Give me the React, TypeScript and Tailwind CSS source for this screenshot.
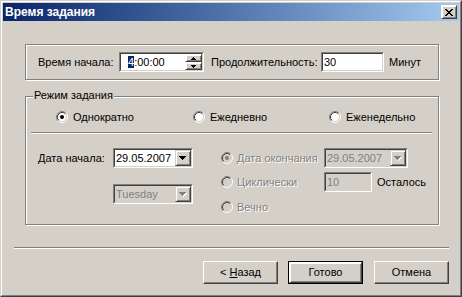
import type { ReactNode } from "react";

const sunkenOuter = "border border-t-[#808080] border-l-[#808080] border-r-white border-b-white";
const sunkenInner = "border border-t-[#404040] border-l-[#404040] border-r-[#d4d0c8] border-b-[#d4d0c8]";
const raised =
  "border border-t-[#d4d0c8] border-l-[#d4d0c8] border-r-[#404040] border-b-[#404040] shadow-[inset_1px_1px_0_#fff,inset_-1px_-1px_0_#808080]";
const etched = "border border-[#808080] shadow-[inset_1px_1px_0_#fff,1px_1px_0_#fff]";
const embossed = "text-[#808080] [text-shadow:1px_1px_0_#fff]";

const ArrowDown = ({ disabled }: { disabled?: boolean }) => (
  <svg width="8" height="5" viewBox="0 0 8 5" shapeRendering="crispEdges">
    {disabled ? (
      <path d="M1 1h7v1H1z M2 2h5v1H2z M3 3h3v1H3z M4 4h1v1H4z" fill="#fff" />
    ) : null}
    <path d="M0 0h7v1H0z M1 1h5v1H1z M2 2h3v1H2z M3 3h1v1H3z" fill={disabled ? "#808080" : "#000"} />
  </svg>
);

const SpinArrow = ({ up }: { up?: boolean }) => (
  <svg width="5" height="3" viewBox="0 0 5 3" shapeRendering="crispEdges">
    <path d={up ? "M2 0h1v1H2z M1 1h3v1H1z M0 2h5v1H0z" : "M0 0h5v1H0z M1 1h3v1H1z M2 2h1v1H2z"} fill="#000" />
  </svg>
);

const Radio = ({ checked, disabled }: { checked?: boolean; disabled?: boolean }) => (
  <svg width="12" height="12" viewBox="0 0 12 12" className="shrink-0">
    <circle cx="6" cy="6" r="4.5" fill={disabled ? "#d4d0c8" : "#fff"} />
    <path d="M2.11 9.89 A5.5 5.5 0 0 1 9.89 2.11" stroke="#808080" fill="none" />
    <path d="M9.89 2.11 A5.5 5.5 0 0 1 2.11 9.89" stroke="#fff" fill="none" />
    <path d="M2.82 9.18 A4.5 4.5 0 0 1 9.18 2.82" stroke="#404040" fill="none" />
    <path d="M9.18 2.82 A4.5 4.5 0 0 1 2.82 9.18" stroke="#d4d0c8" fill="none" />
    {checked ? <circle cx="6" cy="6" r="2" fill={disabled ? "#808080" : "#000"} /> : null}
  </svg>
);

const RadioItem = ({
  label,
  checked,
  disabled,
  className,
}: {
  label: string;
  checked?: boolean;
  disabled?: boolean;
  className?: string;
}) => (
  <div className={`flex items-center ${className ?? ""}`}>
    <Radio checked={checked} disabled={disabled} />
    <span className={disabled ? embossed : ""}>{label}</span>
  </div>
);

const Field = ({
  width,
  disabled,
  children,
  className,
}: {
  width: string;
  disabled?: boolean;
  children: ReactNode;
  className?: string;
}) => (
  <div className={`${sunkenOuter} ${width} h-[20px] ${className ?? ""}`}>
    <div className={`${sunkenInner} h-full flex ${disabled ? "bg-[#d4d0c8]" : "bg-white"}`}>{children}</div>
  </div>
);

const Combo = ({ text, width, disabled }: { text: string; width: string; disabled?: boolean }) => (
  <Field width={width} disabled={disabled}>
    <span className={`flex-1 pl-px leading-[16px] ${disabled ? "text-[#808080]" : ""}`}>{text}</span>
    <div className={`${raised} w-[16px] h-full flex items-center justify-center bg-[#d4d0c8]`}>
      <ArrowDown disabled={disabled} />
    </div>
  </Field>
);

const Button = ({ children, isDefault, className }: { children: ReactNode; isDefault?: boolean; className?: string }) =>
  isDefault ? (
    <div className={`w-[75px] h-[23px] border border-black ${className ?? ""}`}>
      <div className={`${raised} border-t-white border-l-white h-full flex items-center justify-center`}>{children}</div>
    </div>
  ) : (
    <div
      className={`w-[75px] h-[23px] border border-t-white border-l-white border-r-[#404040] border-b-[#404040] shadow-[inset_-1px_-1px_0_#808080] flex items-center justify-center ${className ?? ""}`}
    >
      {children}
    </div>
  );

export default function App() {
  return (
    <div className="w-[462px] h-[297px] border border-t-[#d4d0c8] border-l-[#d4d0c8] border-r-[#404040] border-b-[#404040] bg-[#d4d0c8] font-['Liberation_Sans',Arial,sans-serif] text-[11px] leading-[13px] text-black select-none">
      <div className="h-full border border-t-white border-l-white border-r-[#808080] border-b-[#808080] p-px flex flex-col">
        <div className="h-[18px] shrink-0 flex items-center justify-between bg-gradient-to-r from-[#0a246a] to-[#a6caf0]">
          <span className="pl-[2px] text-white font-bold text-[12px]">Время задания</span>
          <div className={`${raised} border-t-white border-l-white mr-[2px] w-[16px] h-[14px] flex items-center justify-center bg-[#d4d0c8]`}>
            <svg width="8" height="7" viewBox="0 0 8 7" shapeRendering="crispEdges">
              <path
                d="M0 0h2v1H0z M6 0h2v1H6z M1 1h2v1H1z M5 1h2v1H5z M2 2h4v1H2z M3 3h2v1H3z M2 4h4v1H2z M1 5h2v1H1z M5 5h2v1H5z M0 6h2v1H0z M6 6h2v1H6z"
                fill="#000"
              />
            </svg>
          </div>
        </div>

        <div className={`${etched} mt-[23px] ml-[22px] w-[414px] h-[36px] shrink-0 flex items-center pl-[12px]`}>
          <span className="w-[81px]">Время начала:</span>
          <Field width="w-[85px]">
            <span className="flex-1 pl-[7px] flex items-center">
              <span className="bg-[#0a246a] text-white leading-[12px]">4</span>
              <span>:00:00</span>
            </span>
            <div className="w-[17px] h-full flex flex-col">
              <div className={`${raised} border-t-white border-l-white shadow-[inset_-1px_-1px_0_#808080] h-[8px] flex items-center justify-center bg-[#d4d0c8]`}>
                <SpinArrow up />
              </div>
              <div className={`${raised} border-t-white border-l-white shadow-[inset_-1px_-1px_0_#808080] h-[8px] flex items-center justify-center bg-[#d4d0c8]`}>
                <SpinArrow />
              </div>
            </div>
          </Field>
          <span className="ml-[7px] w-[110px]">Продолжительность:</span>
          <Field width="w-[63px]">
            <span className="pl-px leading-[16px]">30</span>
          </Field>
          <span className="ml-[5px]">Минут</span>
        </div>

        <div className={`${etched} relative mt-[16px] ml-[22px] w-[414px] h-[129px] shrink-0 pt-[13px]`}>
          <span className="absolute -top-[8px] left-[7px] px-px bg-[#d4d0c8]">Режим задания</span>
          <div className="h-[14px] flex items-center pl-[30px]">
            <RadioItem label="Однократно" checked className="w-[137px] gap-[5px]" />
            <RadioItem label="Ежедневно" className="w-[136px] gap-[5px]" />
            <RadioItem label="Еженедельно" className="gap-[5px]" />
          </div>
          <div className="mt-[8px] ml-[5px] w-[401px] h-[2px] border-t border-t-[#808080] border-b border-b-white" />
          <div className="mt-[14px] flex">
            <div className="w-[195px] pl-[12px]">
              <div className="h-[20px] flex items-center">
                <span className="w-[75px]">Дата начала:</span>
                <Combo text="29.05.2007" width="w-[80px]" />
              </div>
              <div className="mt-[16px] ml-[75px]">
                <Combo text="Tuesday" width="w-[80px]" disabled />
              </div>
            </div>
            <div className="flex flex-col">
              <div className="h-[20px] flex items-center">
                <RadioItem label="Дата окончания" checked disabled className="w-[103px] gap-[4px]" />
                <Combo text="29.05.2007" width="w-[84px]" disabled />
              </div>
              <div className="mt-[4px] h-[20px] flex items-center">
                <RadioItem label="Циклически" disabled className="w-[103px] gap-[4px]" />
                <Field width="w-[48px]" disabled>
                  <span className="pl-px leading-[16px] text-[#808080]">10</span>
                </Field>
                <span className="ml-[5px]">Осталось</span>
              </div>
              <div className="mt-[5px] h-[20px] flex items-center">
                <RadioItem label="Вечно" disabled className="gap-[4px]" />
              </div>
            </div>
          </div>
        </div>

        <div className="mt-[22px] ml-[11px] w-[435px] h-[2px] shrink-0 border-t border-t-[#808080] border-b border-b-white" />

        <div className="mt-[12px] flex">
          <Button className="ml-[200px]">
            <span>
                &lt; <span className="underline">Н</span>азад
            </span>
          </Button>
          <Button isDefault className="ml-[10px]">
            Готово
          </Button>
          <Button className="ml-[11px]">Отмена</Button>
        </div>
      </div>
    </div>
  );
}
